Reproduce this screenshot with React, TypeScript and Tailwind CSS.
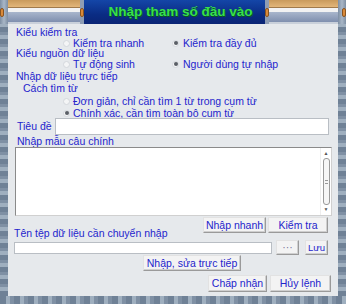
import React from "react";

const checker =
  "bg-[repeating-linear-gradient(0deg,#6f8196_0px,#6f8196_5px,#9fafbf_5px,#9fafbf_9px,#7f90a4_9px,#7f90a4_12px)]";

function Radio({ on }: { on?: boolean }) {
  return (
    <span className="w-[7px] h-[7px] rounded-full border border-[#d4d8dc] bg-[#f4f5f6] flex items-center justify-center shrink-0">
      {on && <span className="w-[4px] h-[4px] rounded-full bg-[#5a5f66]" />}
    </span>
  );
}

function Btn({ children, className = "" }: { children: React.ReactNode; className?: string }) {
  return (
    <div
      className={
        "flex items-center justify-center bg-[#f3f3f3] border border-t-[#e2e2e2] border-l-[#e2e2e2] border-r-[#9a9a9a] border-b-[#9a9a9a] shadow-[inset_-1px_-1px_0_#cfcfcf] " +
        className
      }
    >
      {children}
    </div>
  );
}

function Knob() {
  return <div className="w-[4px] h-[9px] rounded-full bg-[#d98a3a] border border-[#8a5420]" />;
}

function Wood({ className = "" }: { className?: string }) {
  return (
    <div className={"flex flex-col " + className}>
      <div className="h-[7px] bg-[linear-gradient(180deg,#c99a5c,#e2b67a)]" />
      <div className="h-[1px] bg-[#a07a4c]" />
      <div className="h-[4px] bg-[#f2f2f2]" />
      <div className="h-[10px] bg-[linear-gradient(180deg,#a9b6cc,#7f8fae)]" />
      <div className="h-[2px] bg-[#c9d0da]" />
    </div>
  );
}

export default function App() {
  return (
    <div className="w-[346px] h-[304px] flex flex-col font-['Liberation_Sans',Arial,sans-serif] overflow-hidden">
      {/* title bar */}
      <div className="h-[24px] flex">
        <div className="w-[8px] bg-[linear-gradient(90deg,#7d8ea3,#a9b7c7,#7d8ea3)] flex items-center">
          <Knob />
        </div>
        <Wood className="w-[72px]" />
        <div className="w-[4px] bg-[#8e9db4] flex items-center">
          <Knob />
        </div>
        <div className="flex-1 bg-[linear-gradient(180deg,#1446a8,#0a2c84_60%,#0a2474)] flex items-center justify-center pl-[12px]">
          <span className="text-[13.5px] font-bold text-[#37e04c] [text-shadow:1px_1px_0_#0a5a1a]">
            Nhập tham số đầu vào
          </span>
        </div>
        <div className="w-[4px] bg-[#8e9db4] flex items-center">
          <Knob />
        </div>
        <Wood className="w-[69px]" />
        <div className="w-[8px] bg-[linear-gradient(90deg,#7d8ea3,#a9b7c7,#7d8ea3)] flex items-center justify-end">
          <Knob />
        </div>
      </div>

      <div className="flex-1 flex">
        <div className={"w-[8px] " + checker} />
        <div className="flex-1 flex flex-col bg-[#e6e9ec] text-[10.5px] leading-[11px] text-[#2424cc] pt-[3px]">
          <div className="h-[11px] flex items-center pl-[8px]">Kiểu kiểm tra</div>
          <div className="h-[10px] flex items-center">
            <div className="w-[164px] pl-[55px] flex items-center gap-[3px]">
              <Radio />
              <span>Kiểm tra nhanh</span>
            </div>
            <div className="flex items-center gap-[4px]">
              <Radio on />
              <span>Kiểm tra đầy đủ</span>
            </div>
          </div>
          <div className="h-[11px] flex items-center pl-[8px]">Kiểu nguồn dữ liệu</div>
          <div className="h-[10px] flex items-center">
            <div className="w-[164px] pl-[55px] flex items-center gap-[3px]">
              <Radio />
              <span>Tự động sinh</span>
            </div>
            <div className="flex items-center gap-[4px]">
              <Radio on />
              <span>Người dùng tự nhập</span>
            </div>
          </div>
          <div className="h-[12px] mt-[1px] flex items-center pl-[8px]">Nhập dữ liệu trực tiếp</div>
          <div className="h-[12px] flex items-center pl-[15px]">Cách tìm từ</div>
          <div className="h-[13px] mt-[1px] flex items-center pl-[55px] gap-[3px]">
            <Radio />
            <span>Đơn giản, chỉ cần tìm 1 từ trong cụm từ</span>
          </div>
          <div className="h-[10px] flex items-center pl-[55px] gap-[3px]">
            <Radio on />
            <span>Chính xác, cần tìm toàn bộ cụm từ</span>
          </div>
          <div className="h-[17px] flex items-center pl-[9px] pr-[9px]">
            <span className="w-[38px]">Tiêu đề</span>
            <div className="flex-1 h-[17px] bg-white border border-[#b9bec4]" />
          </div>
          <div className="h-[12px] flex items-center pl-[9px]">Nhập mẫu câu chính</div>
          <div className="h-[69px] ml-[7px] mr-[6px] bg-white border border-t-[#8a8a8a] border-l-[#8a8a8a] border-r-[#d0d0d0] border-b-[#d0d0d0] flex justify-end">
            <div className="w-[11px] flex flex-col items-center pt-[3px] pb-[3px] border-l border-[#eeeeee]">
              <span className="text-[5px] leading-[5px] text-[#555]">▲</span>
              <div className="flex-1 w-[7px] my-[2px] rounded-[3px] border border-[#9a9a9a] bg-[#f6f6f6] flex items-center justify-center">
                <span className="w-[3px] h-[4px] border-y border-[#999]" />
              </div>
              <span className="text-[5px] leading-[5px] text-[#555]">▼</span>
            </div>
          </div>
          <div className="h-[23px] mt-[1px] flex justify-between pr-[10px]">
            <span className="self-end pl-[6px] pb-[1px]">Tên tệp dữ liệu cần chuyển nhập</span>
            <div className="flex gap-[2px] self-start">
              <Btn className="w-[63px] h-[16px]">Nhập nhanh</Btn>
              <Btn className="w-[60px] h-[16px]">Kiểm tra</Btn>
            </div>
          </div>
          <div className="h-[15px] flex items-center pl-[6px] pr-[10px]">
            <div className="w-[258px] h-[12px] bg-white border border-[#b9bec4]" />
            <Btn className="ml-[4px] w-[23px] h-[15px] text-[#7a7a9a]">···</Btn>
            <Btn className="ml-[6px] w-[23px] h-[15px] text-[9.5px]">Lưu</Btn>
          </div>
          <div className="h-[16px] flex pl-[135px]">
            <Btn className="w-[98px] h-[16px]">Nhập, sửa trực tiếp</Btn>
          </div>
          <div className="h-[17px] mt-[4px] flex justify-end pr-[7px] gap-[3px]">
            <Btn className="w-[59px] h-[17px]">Chấp nhận</Btn>
            <Btn className="w-[61px] h-[17px]">Hủy lệnh</Btn>
          </div>
        </div>
        <div className={"w-[8px] " + checker} />
      </div>
      <div className="h-[8px] bg-[repeating-linear-gradient(90deg,#6f8196_0px,#6f8196_6px,#9fafbf_6px,#9fafbf_10px,#7f90a4_10px,#7f90a4_14px)]" />
    </div>
  );
}
